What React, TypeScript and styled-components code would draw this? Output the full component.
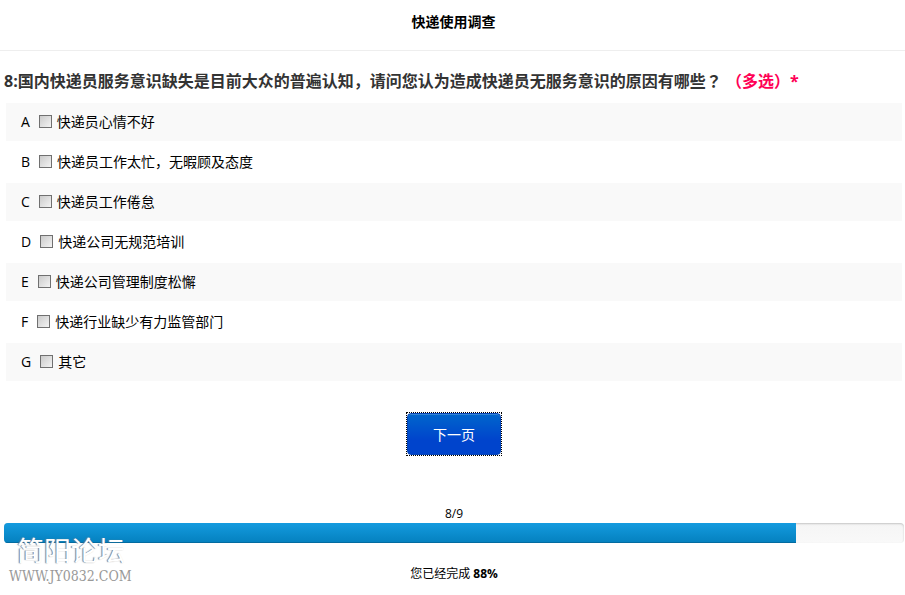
import React from "react";
import styled, { createGlobalStyle } from "styled-components";

const GlobalStyle = createGlobalStyle`
  * { box-sizing: border-box; }
  body {
    margin: 0;
    background: #fff;
    color: #000;
    font-family: "Open Sans", "Noto Sans CJK SC", sans-serif;
    font-size: 14px;
    line-height: 20px;
  }
`;

const Page = styled.div`
  display: flex;
  flex-direction: column;
`;

const Header = styled.header`
  padding: 12px 0 18px;
  border-bottom: 1px solid #eee;
  text-align: center;
`;

const Title = styled.h1`
  margin: 0 0 0 2px;
  font-size: 14px;
  line-height: 20px;
  font-weight: 700;
`;

const Survey = styled.form`
  display: flex;
  flex-direction: column;
  padding: 20px 1px 0 4px;
`;

const Question = styled.fieldset`
  border: 0;
  margin: 0;
  padding: 0;
  min-width: 0;
`;

const Prompt = styled.legend`
  padding: 0;
  font-size: 16px;
  line-height: 20px;
  font-weight: 700;
  color: #333;
`;

const Required = styled.span`
  color: #f05;
`;

const CenteredMark = styled.span`
  font-family: "Noto Sans CJK TC", sans-serif;
  line-height: 1;
`;

const Options = styled.ul`
  list-style: none;
  margin: 12px 2px 0;
  padding: 0;
  display: flex;
  flex-direction: column;
  gap: 2px;
`;

const Option = styled.li`
  display: flex;
  align-items: center;
  height: 38px;
  padding: 0 15px;
  &:nth-child(odd) { background: #f9f9f9; }
`;

const OptionLabel = styled.label`
  display: flex;
  align-items: center;
`;

const Checkbox = styled.input`
  appearance: none;
  width: 13px;
  height: 13px;
  margin: 0 5px 2px 9px;
  border: 1px solid #707070;
  background: linear-gradient(135deg, #cbcbcb, #f3f3f3);
  &:checked { background: #0a78c0; }
`;

const ButtonFrame = styled.div`
  align-self: center;
  display: flex;
  margin: 31px 0 0;
  border: 1px dotted #000;
`;

const NextButton = styled.button`
  width: 94px;
  height: 42px;
  padding: 2px 0 0;
  border: 1px solid #0645b8;
  border-radius: 4px;
  background: linear-gradient(#06c, #04c 65%);
  box-shadow: inset 0 1px 0 #3385d6;
  color: #fff;
  font: inherit;
`;

const Progress = styled.section`
  position: relative;
  display: flex;
  flex-direction: column;
  margin-top: 48px;
  font-size: 12px;
  text-align: center;
`;

const PageCount = styled.span`
  height: 19px;
  line-height: 20px;
`;

const Track = styled.div`
  height: 20px;
  overflow: hidden;
  border-radius: 4px;
  background: linear-gradient(#f5f5f5, #f9f9f9);
  box-shadow: inset 0 1px 2px rgba(0, 0, 0, 0.2);
`;

const Fill = styled.div`
  height: 100%;
  background: linear-gradient(#149bdf, #0480be);
  box-shadow: inset 0 -1px 0 #036ba0;
`;

const Status = styled.p`
  margin: 21px 0 0;
`;

const Watermark = styled.div`
  position: absolute;
  left: 5px;
  top: 33px;
  display: flex;
  flex-direction: column;
  gap: 3px;
  text-align: left;
  pointer-events: none;
`;

const ForumName = styled.span`
  padding-left: 8px;
  font-size: 27px;
  line-height: 28px;
  color: #fff;
  text-shadow: -1px 0 1px #777;
`;

const ForumUrl = styled.span`
  font-family: "DejaVu Serif Condensed", "DejaVu Serif", serif;
  font-size: 14px;
  line-height: 16px;
  color: #999;
`;

const options = [
  "快递员心情不好",
  "快递员工作太忙，无暇顾及态度",
  "快递员工作倦怠",
  "快递公司无规范培训",
  "快递公司管理制度松懈",
  "快递行业缺少有力监管部门",
  "其它",
];

const percent = 88;

export default function App() {
  return (
    <Page lang="zh-CN">
      <GlobalStyle />
      <Header>
        <Title>快递使用调查</Title>
      </Header>
      <Survey onSubmit={(e) => e.preventDefault()}>
        <Question>
          <Prompt>
            8:国内快递员服务意识缺失是目前大众的普遍认知，请问您认为造成快递员无服务意识的原因有哪些
            <CenteredMark lang="zh-TW">？</CenteredMark>{" "}
            <Required>（多选）*</Required>
          </Prompt>
          <Options>
            {options.map((text, i) => (
              <Option key={text}>
                <OptionLabel>
                  {String.fromCharCode(65 + i)}
                  <Checkbox type="checkbox" name="reason" value={i} />
                  {text}
                </OptionLabel>
              </Option>
            ))}
          </Options>
        </Question>
        <ButtonFrame>
          <NextButton type="submit">下一页</NextButton>
        </ButtonFrame>
        <Progress>
          <PageCount>8/9</PageCount>
          <Track
            role="progressbar"
            aria-label="完成进度"
            aria-valuenow={percent}
            aria-valuemin={0}
            aria-valuemax={100}
          >
            <Fill style={{ width: `${percent}%` }} />
          </Track>
          <Status>
            您已经完成 <strong>{percent}%</strong>
          </Status>
          <Watermark>
            <ForumName>简阳论坛</ForumName>
            <ForumUrl>WWW.JY0832.COM</ForumUrl>
          </Watermark>
        </Progress>
      </Survey>
    </Page>
  );
}
